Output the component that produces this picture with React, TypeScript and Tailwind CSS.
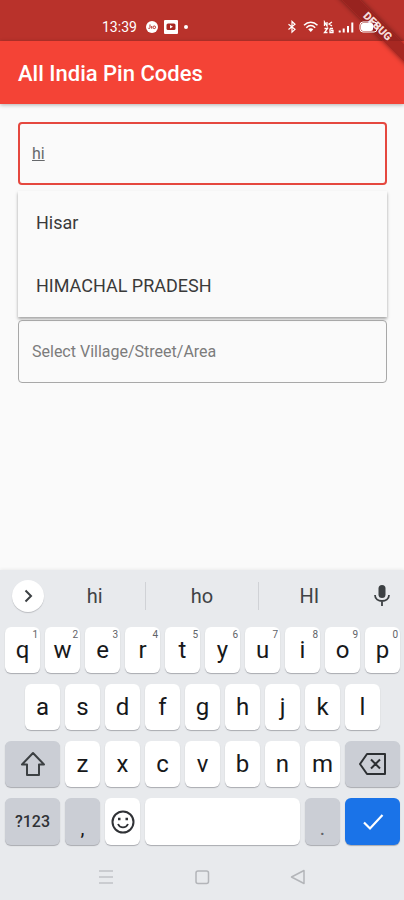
import type { ReactNode } from 'react';
import { useState } from 'react';

type KeyProps = {
  label: string;
  size?: string;
  tone?: string;
  hint?: string;
  children?: ReactNode;
};

function Key({ label, size = 'flex-[35_1_0%]', tone = 'bg-white', hint, children }: KeyProps) {
  return (
    <button
      type="button"
      aria-label={label}
      className={`relative flex min-w-0 items-center justify-center rounded-md text-2xl text-[#17181a] shadow-[0_1px_1px_#a9abb0] ${size} ${tone}`}
    >
      {children ?? label}
      {hint && <span className="absolute right-0.5 top-0.5 text-[10px] leading-3 text-[#5f6368]">{hint}</span>}
    </button>
  );
}

function StatusBar() {
  return (
    <div className="flex h-[41px] items-center justify-between bg-[#b9322b] pl-[102px] pr-6 pt-3 text-white">
      <div className="flex items-center">
        <span className="w-9 text-sm leading-4">13:39</span>
        <svg className="ml-2 h-3 w-3" viewBox="0 0 12 12" aria-hidden="true">
          <circle cx="6" cy="6" r="6" fill="#fff" />
          <path d="M4 3.500v3.200c0 1-1.600 1-1.800.2M5.700 5v2.700M7 6.300a1.300 1.300 0 1 0 2.600 0a1.300 1.300 0 1 0-2.600 0" fill="none" stroke="#b9322b" />
        </svg>
        <svg className="ml-1.5 h-3.5 w-3.5" viewBox="0 0 14 14" aria-hidden="true">
          <rect width="14" height="14" rx="1" fill="#fff" />
          <rect x="2.500" y="3.500" width="9" height="6.500" rx="1.500" fill="#a92722" />
          <path d="M6 5v3.500l3-1.700z" fill="#fff" />
        </svg>
        <span className="ml-1.5 h-1 w-1 rounded-full bg-white" />
      </div>
      <svg className="z-10 h-3.5 w-[94px]" viewBox="0 0 94 14" fill="none" stroke="#fff" aria-hidden="true">
        <path d="M2.500 4.200l6.500 5.200-3 2.800V1.500l3 2.800-6.500 5.200" strokeWidth="1.200" />
        <path d="M18 5.300c4-4 9.500-4 13.500 0M20.300 7.700c2.700-2.600 6.200-2.600 8.900 0" strokeWidth="1.500" />
        <path d="M22.200 9.300c1.500-1.300 3.600-1.300 5.100 0L24.750 12z" fill="#fff" stroke="none" />
        <path d="M38.500 6V2l2.500 4V2M46 2l-3 2 3 2M38.500 8.500h3l-3 4h3M44 8.500v4h3v-2h-2M47 8.500h-3" strokeWidth="1.300" />
        <path d="M53.700 12.500v-2M57.700 12.500V8.500M62 12.500V6M66.300 12.500v-10" strokeWidth="2" />
        <rect x="74" y="2" width="17" height="10" rx="3" strokeWidth="1" />
        <rect x="75" y="3" width="12" height="8" rx="2" fill="#fff" stroke="none" />
      </svg>
    </div>
  );
}

function DebugBanner() {
  return (
    <div className="pointer-events-none absolute right-0 top-0 h-20 w-20 overflow-hidden">
      <div className="absolute right-[-24px] top-5 h-[13px] w-[101px] rotate-45 bg-[#8e1f1c]/75 text-center text-[11px] font-black leading-[13px] text-[#f6dcda] shadow-[0_0_5px_rgba(0,0,0,0.45)]">
        DEBUG
      </div>
    </div>
  );
}

const topRow = 'qwertyuiop'.split('');
const homeRow = 'asdfghjkl'.split('');
const bottomRow = 'zxcvbnm'.split('');
const suggestions = [
  { word: 'hi', size: 'flex-[10_1_0%]' },
  { word: 'ho', size: 'flex-[11_1_0%]' },
  { word: 'HI', size: 'flex-[10_1_0%]' },
];
const grey = 'bg-[#cbced5]';
const wide = 'flex-[55_1_0%]';

function Keyboard() {
  return (
    <section aria-label="Keyboard" className="bg-[#e8eaed] shadow-[0_-1px_3px_rgba(0,0,0,0.06)]">
      <div className="flex h-[52px] items-center px-3 text-xl text-[#404246]">
        <button type="button" aria-label="More tools" className="flex h-8 w-8 items-center justify-center rounded-full bg-white shadow-[0_1px_1px_#bbbdc1]">
          <svg className="h-4 w-4" viewBox="0 0 16 16" fill="none" stroke="#3c4043" strokeWidth="2" aria-hidden="true">
            <path d="M5.500 2.500L11 8l-5.500 5.500" />
          </svg>
        </button>
        <div className="flex h-7 flex-1 divide-x divide-[#d0d2d6]">
          {suggestions.map(({ word, size }) => (
            <button key={word} type="button" className={`leading-7 ${size}`}>
              {word}
            </button>
          ))}
        </div>
        <button type="button" aria-label="Voice input" className="ml-3 flex w-5 justify-center">
          <svg className="h-6 w-4 shrink-0" viewBox="0 0 16 24" fill="none" stroke="#3c4043" strokeWidth="1.800" aria-hidden="true">
            <rect x="4.500" y="1" width="7" height="13" rx="3.500" fill="#3c4043" stroke="none" />
            <path d="M1 11c0 8 14 8 14 0M8 17v5" />
          </svg>
        </button>
      </div>
      <div className="flex flex-col gap-[11px] pl-[5px] pr-1 pt-[5px]">
        <div className="flex h-[46px] gap-[5px]">
          {topRow.map((letter, i) => (
            <Key key={letter} label={letter} hint={String((i + 1) % 10)} />
          ))}
        </div>
        <div className="flex h-[46px] gap-[5px] px-5">
          {homeRow.map((letter) => (
            <Key key={letter} label={letter} />
          ))}
        </div>
        <div className="flex h-[46px] gap-[5px]">
          <Key label="Shift" size={wide} tone={grey}>
            <svg className="h-7 w-7" viewBox="0 0 28 28" fill="none" stroke="#3c4043" strokeWidth="2" strokeLinejoin="round" aria-hidden="true">
              <path d="M14 3L3 14.500h5V25h12V14.500h5z" />
            </svg>
          </Key>
          {bottomRow.map((letter) => (
            <Key key={letter} label={letter} />
          ))}
          <Key label="Backspace" size={wide} tone={grey}>
            <svg className="h-7 w-7" viewBox="0 0 28 28" fill="none" stroke="#2d3033" strokeWidth="2" strokeLinejoin="round" aria-hidden="true">
              <path d="M8 4H26v20H8L1 14z M12 9.500l9 9M21 9.500l-9 9" />
            </svg>
          </Key>
        </div>
        <div className="flex h-[47px] gap-[5px]">
          <Key label="Symbols" size={wide} tone={grey}>
            <span className="text-base font-medium text-[#303236]">?123</span>
          </Key>
          <Key label="," tone={grey}>
            <span className="pt-3 text-xl">,</span>
          </Key>
          <Key label="Emoji">
            <svg className="h-6 w-6" viewBox="0 0 24 24" fill="none" stroke="#303236" strokeWidth="2" aria-hidden="true">
              <circle cx="12" cy="12" r="10.500" />
              <path d="M7 14c2 4.500 8 4.500 10 0" strokeWidth="1.800" />
              <path d="M7 9h2.500M14.500 9H17" strokeWidth="2.500" />
            </svg>
          </Key>
          <Key label="Space" size="flex-[155_1_0%]">
            {' '}
          </Key>
          <Key label="." tone={grey}>
            <span className="pt-3 text-xl text-[#5f6368]">.</span>
          </Key>
          <Key label="Done" size={wide} tone="bg-[#1a73e8]">
            <svg className="h-6 w-6" viewBox="0 0 24 24" fill="none" stroke="#fff" strokeWidth="2.200" aria-hidden="true">
              <path d="M3 12.500l6 6L21.500 5" />
            </svg>
          </Key>
        </div>
      </div>
      <nav aria-label="System" className="flex h-[55px] items-center justify-center gap-20 pt-2">
        <button type="button" aria-label="Recent apps">
          <svg className="h-4 w-4" viewBox="0 0 16 16" stroke="#c0c2c6" strokeWidth="1.500" aria-hidden="true">
            <path d="M1 2h14M1 8h14M1 14h14" />
          </svg>
        </button>
        <button type="button" aria-label="Home">
          <svg className="h-4 w-4" viewBox="0 0 16 16" fill="none" stroke="#b3b5b9" strokeWidth="1.500" aria-hidden="true">
            <rect x="2" y="2" width="12.500" height="12.500" rx="2" />
          </svg>
        </button>
        <button type="button" aria-label="Back">
          <svg className="h-4 w-4" viewBox="0 0 16 16" fill="none" stroke="#b3b5b9" strokeWidth="1.500" strokeLinejoin="round" aria-hidden="true">
            <path d="M14 1.500v13L1.500 8z" />
          </svg>
        </button>
      </nav>
    </section>
  );
}

export default function App() {
  const [query, setQuery] = useState('hi');
  const [area, setArea] = useState('');

  return (
    <div className="relative flex min-h-screen flex-col overflow-hidden bg-[#fafafa] font-[Roboto,sans-serif]">
      <DebugBanner />
      <StatusBar />
      <header className="flex h-[63px] items-center bg-[#f44336] px-[18px] pt-0.5 shadow-[0_1px_4px_rgba(0,0,0,0.3)]">
        <h1 className="text-[22px] font-medium leading-7 text-white">All India Pin Codes</h1>
      </header>
      <main className="flex-1 pl-[18px] pr-[17px] pt-[18px]">
        <input
          aria-label="City or state"
          value={query}
          onChange={(e) => setQuery(e.target.value)}
          className="block h-[63px] w-full rounded border-2 border-[#e5483f] px-3 text-base text-[#66686b] underline outline-none"
        />
        <ul className="mt-1.5 bg-[#fafafa] text-lg text-[#3a3a3a] shadow-[0_2px_3px_rgba(0,0,0,0.35)]">
          {['Hisar', 'HIMACHAL PRADESH'].map((name) => (
            <li key={name}>
              <button type="button" className="block h-[63px] w-full px-[18px] text-left">
                {name}
              </button>
            </li>
          ))}
        </ul>
        <input
          aria-label="Village, street or area"
          placeholder="Select Village/Street/Area"
          value={area}
          onChange={(e) => setArea(e.target.value)}
          className="mt-[3px] block h-[63px] w-full rounded border border-[#a8a8a8] px-[13px] text-base text-[#333333] outline-none placeholder:text-[#7c7c7c]"
        />
      </main>
      <Keyboard />
    </div>
  );
}
